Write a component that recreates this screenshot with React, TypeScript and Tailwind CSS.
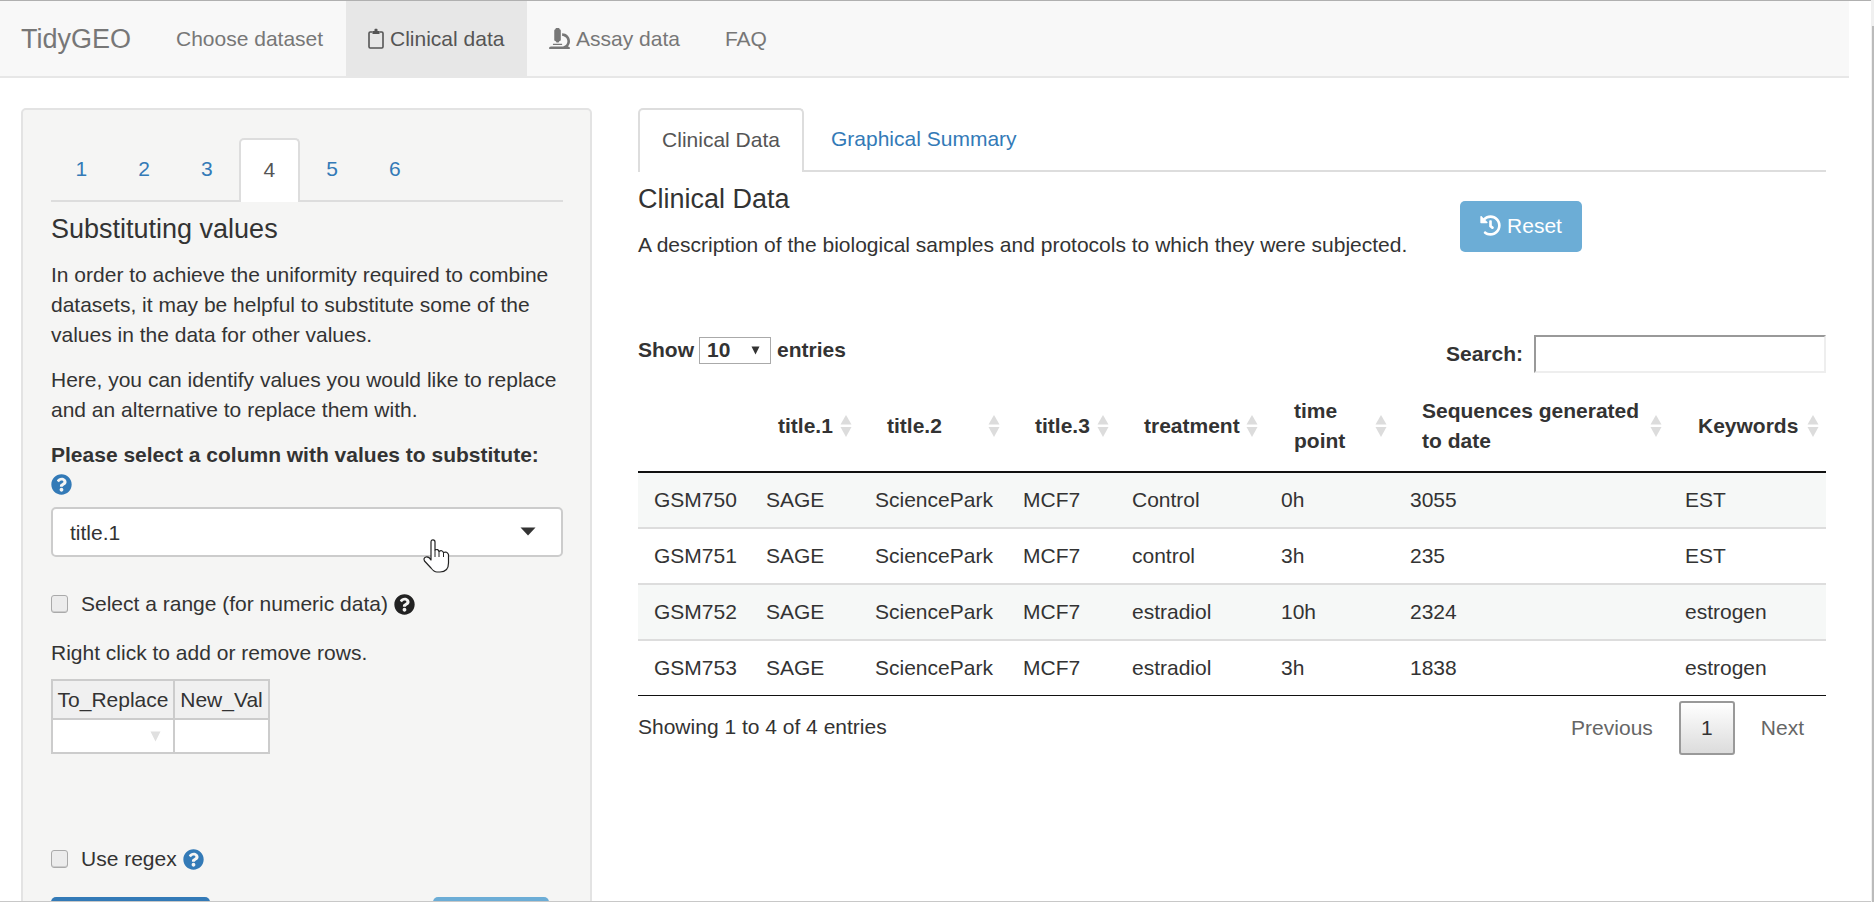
import { FaHistory, FaMicroscope, FaQuestionCircle } from "react-icons/fa";

const font = { fontFamily: '"Liberation Sans", Arial, sans-serif' };

function SortIcon() {
  return (
    <svg width="12" height="24" viewBox="0 0 12 24" className="shrink-0">
      <polygon points="6,1 11.5,10.5 0.5,10.5" fill="#dcdcdc" />
      <polygon points="0.5,13 11.5,13 6,23" fill="#dcdcdc" />
    </svg>
  );
}

function ClipboardIcon() {
  return (
    <svg width="16" height="21" viewBox="0 0 16 21" className="shrink-0">
      <path d="M4.5 4H2.2Q1 4 1 5.2V18.8Q1 20 2.2 20H13.8Q15 20 15 18.8V5.2Q15 4 13.8 4H11.5" fill="none" stroke="currentColor" strokeWidth="1.6" />
      <path d="M6.5 3V1.4Q6.5 .8 7.2 .8H8.8Q9.5 .8 9.5 1.4V3H11.5V6H4.5V3Z" fill="currentColor" />
    </svg>
  );
}

function HandCursor() {
  return (
    <svg width="27" height="34" viewBox="0 0 27 34" className="absolute left-[423px] top-[539px]">
      <path
        d="M8 3Q8 .8 10 .8Q12 .8 12 3V11Q15 9.5 16 12.5Q19 10.5 20.5 13.5Q24 12 25.5 15.5V24Q25.5 33 17 33H14Q11 33 8 29L1.5 22Q0 19 3 18Q6 17.5 8 21Z"
        fill="#fff"
        stroke="#222"
        strokeWidth="1.2"
        strokeLinejoin="round"
      />
      <path d="M12 11V18M16 12.5V18M20.5 13.5V18" fill="none" stroke="#222" strokeWidth="1" />
    </svg>
  );
}

function Checkbox() {
  return <div className="h-[18px] w-[17px] shrink-0 rounded-[3px] border border-[#aaa] bg-[#ececec] shadow-[inset_0_-1px_0_#ccc]" />;
}

const rows = [
  ["GSM750", "SAGE", "SciencePark", "MCF7", "Control", "0h", "3055", "EST"],
  ["GSM751", "SAGE", "SciencePark", "MCF7", "control", "3h", "235", "EST"],
  ["GSM752", "SAGE", "SciencePark", "MCF7", "estradiol", "10h", "2324", "estrogen"],
  ["GSM753", "SAGE", "SciencePark", "MCF7", "estradiol", "3h", "1838", "estrogen"],
];

const headers = ["title.1", "title.2", "title.3", "treatment", "time point", "Sequences generated to date", "Keywords"];
const widths = [112, 109, 148, 109, 149, 129, 275, 157];

export default function App() {
  return (
    <div style={font} className="relative flex h-[902px] w-[1874px] flex-col overflow-hidden bg-white text-[21px] leading-[30px] text-[#333]">
      {/* navbar */}
      <div className="border-t border-[#b0b0b0]">
        <nav className="flex h-[77px] w-[1849px] items-stretch border-b-2 border-[#e7e7e7] bg-[#f8f8f8] text-[#777]">
          <div className="ml-[21px] flex w-[133px] items-center text-[27px] leading-[30px]">TidyGEO</div>
          <div className="flex w-[192px] items-center px-[22px]">Choose dataset</div>
          <div className="flex w-[181px] items-center gap-[6px] bg-[#e7e7e7] px-[22px] text-[#555]">
            <ClipboardIcon />
            <span>Clinical data</span>
          </div>
          <div className="flex items-center gap-[6px] px-[22px]">
            <FaMicroscope className="h-[21px] w-[21px] shrink-0" />
            <span>Assay data</span>
          </div>
          <div className="flex items-center pl-[23px]">FAQ</div>
        </nav>
      </div>

      <main className="flex items-start">
        {/* left panel */}
        <section className="ml-[21px] mt-[30px] h-[900px] w-[571px] shrink-0 rounded-[5px] border-2 border-[#e3e3e3] bg-[#f5f5f4] pl-[28px] pr-[27px] pt-[28px]">
          <div className="flex h-[64px] w-[512px] items-stretch border-b-2 border-[#ddd]">
            {["1", "2", "3", "4", "5", "6"].map((n) =>
              n === "4" ? (
                <div key={n} className="mr-[2px] -mb-[2px] flex h-[64px] w-[60.7px] items-center justify-center rounded-t-[5px] border-2 border-b-0 border-[#ddd] bg-white pb-[3px] text-[#555]">
                  {n}
                </div>
              ) : (
                <div key={n} className="mr-[2px] flex w-[60.7px] items-center justify-center text-[#337ab7]">
                  {n}
                </div>
              )
            )}
          </div>
          <h4 className="mt-[10px] text-[27px] font-normal leading-[34px]">Substituting values</h4>
          <p className="mt-[14px] w-[512px]">
            In order to achieve the uniformity required to combine datasets, it may be helpful to substitute some of the values in the data for other values.
          </p>
          <p className="mt-[15px] w-[512px]">Here, you can identify values you would like to replace and an alternative to replace them with.</p>
          <div className="mt-[15px] font-bold">Please select a column with values to substitute:</div>
          <div className="flex h-[29px] items-center">
            <FaQuestionCircle className="h-[21px] w-[21px] text-[#337ab7]" />
          </div>
          <div className="mt-[8px] flex h-[50px] w-[512px] items-center justify-between rounded-[5px] border-2 border-[#ccc] bg-white pl-[17px] pr-[25px]">
            <span className="translate-y-px">title.1</span>
            <svg width="16" height="9" viewBox="0 0 16 9" className="-mt-[2px]">
              <polygon points="0.5,0.5 15.5,0.5 8,8.5" fill="#333" />
            </svg>
          </div>
          <div className="mt-[32px] flex h-[30px] items-center">
            <Checkbox />
            <span className="ml-[13px]">Select a range (for numeric data)</span>
            <FaQuestionCircle className="ml-[6px] h-[21px] w-[21px] text-[#222]" />
          </div>
          <div className="mt-[19px]">Right click to add or remove rows.</div>
          <div className="mt-[11px] w-[219px] border-2 border-[#ccc] bg-white">
            <div className="flex h-[39px] border-b-2 border-[#ccc] bg-[#f0f0f0]">
              <div className="flex w-[122px] items-center justify-center border-r-2 border-[#ccc]">To_Replace</div>
              <div className="flex flex-1 items-center justify-center">New_Val</div>
            </div>
            <div className="flex h-[32px]">
              <div className="flex w-[122px] items-center justify-end border-r-2 border-[#ccc] pr-[12px]">
                <svg width="11" height="11" viewBox="0 0 11 11">
                  <polygon points="0.5,0.5 10.5,0.5 5.5,10.5" fill="#e0e0e0" />
                </svg>
              </div>
              <div className="flex-1" />
            </div>
          </div>
          <div className="mt-[90px] flex h-[30px] items-center">
            <Checkbox />
            <span className="ml-[13px]">Use regex</span>
            <FaQuestionCircle className="ml-[6px] h-[21px] w-[21px] text-[#337ab7]" />
          </div>
          <div className="mt-[23px] flex w-[512px] items-start">
            <div className="h-[50px] w-[159px] rounded-[5px] bg-[#337ab7]" />
            <div className="ml-[223px] h-[50px] w-[116px] rounded-[5px] bg-[#6cadd6]" />
          </div>
        </section>

        {/* right column */}
        <section className="ml-[46px] mt-[30px] w-[1188px]">
          <div className="flex h-[64px] items-stretch border-b-2 border-[#ddd]">
            <div className="-mb-[2px] flex h-[64px] w-[166px] items-center justify-center rounded-t-[5px] border-2 border-b-0 border-[#ddd] bg-white pb-[3px] text-[#555]">
              Clinical Data
            </div>
            <div className="flex items-center pl-[27px] text-[#337ab7]">Graphical Summary</div>
          </div>

          <div className="flex items-start">
            <div className="w-[822px] pt-[10px]">
              <h4 className="text-[27px] font-normal leading-[34px]">Clinical Data</h4>
              <p className="mt-[14px]">A description of the biological samples and protocols to which they were subjected.</p>
            </div>
            <div className="mt-[29px] flex h-[51px] w-[122px] items-center justify-center gap-[6px] rounded-[5px] bg-[#6cadd6] pb-[2px] text-white">
              <FaHistory className="h-[21px] w-[21px]" />
              <span>Reset</span>
            </div>
          </div>

          <div className="mt-[75px] flex items-start justify-between">
            <div className="flex h-[30px] items-center font-bold">
              <span>Show</span>
              <div className="ml-[5px] flex h-[27px] w-[72px] items-center justify-between border border-[#aaa] bg-white pl-[7px] pr-[10px]">
                <span>10</span>
                <svg width="9" height="9" viewBox="0 0 9 9">
                  <polygon points="0.5,0.5 8.5,0.5 4.5,8.5" fill="#333" />
                </svg>
              </div>
              <span className="ml-[6px]">entries</span>
            </div>
            <div className="flex h-[38px] items-center font-bold">
              <span className="mr-[11px]">Search:</span>
              <div className="h-[38px] w-[292px] border-2 border-b-[#eee] border-l-[#999] border-r-[#eee] border-t-[#999] bg-white" />
            </div>
          </div>

          <table className="mt-[12px] w-[1188px] table-fixed border-separate border-spacing-0">
            <colgroup>
              {widths.map((w, i) => (
                <col key={i} style={{ width: w }} />
              ))}
            </colgroup>
            <thead>
              <tr>
                <th className="h-[88px] border-b-2 border-[#111]" />
                {headers.map((h) => (
                  <th key={h} className={`h-[88px] border-b-2 border-[#111] pb-[4px] ${h === "time point" || h === "Keywords" ? "pl-[29px]" : "pl-[28px]"} pr-[7px] text-left font-bold`}>
                    <div className="flex items-center justify-between">
                      <span className={h === "time point" ? "w-[60px]" : h.startsWith("Seq") ? "w-[225px]" : ""}>{h}</span>
                      <SortIcon />
                    </div>
                  </th>
                ))}
              </tr>
            </thead>
            <tbody>
              {rows.map((r, i) => (
                <tr key={r[0]} className={i % 2 === 0 ? "bg-[#f6f8f7]" : "bg-white"}>
                  {r.map((c, j) => (
                    <td key={j} className={i === 3 ? "h-[55px] border-b border-[#111] pl-[16px]" : "h-[56px] border-b-2 border-[#ddd] pl-[16px]"}>
                      {c}
                    </td>
                  ))}
                </tr>
              ))}
            </tbody>
          </table>

          <div className="mt-[5px] flex items-start justify-between">
            <div className="flex h-[52px] items-center">Showing 1 to 4 of 4 entries</div>
            <div className="flex h-[54px] items-center pr-[22px] text-[#666]">
              <span>Previous</span>
              <div className="mx-[26px] flex h-[54px] w-[56px] items-center justify-center rounded-[3px] border-2 border-[#999] bg-linear-to-b from-white to-[#dcdcdc] text-[#333]">
                1
              </div>
              <span>Next</span>
            </div>
          </div>
        </section>
      </main>

      <HandCursor />
      {/* browser window edges */}
      <div className="absolute bottom-0 left-0 right-0 h-px bg-[#c8c8c8]" />
      <div className="absolute bottom-0 right-0 top-0 w-[3px] bg-[#f0f0f0]">
        <div className="absolute bottom-0 right-0 top-[26px] w-[2px] bg-[#bbb]" />
      </div>
    </div>
  );
}
